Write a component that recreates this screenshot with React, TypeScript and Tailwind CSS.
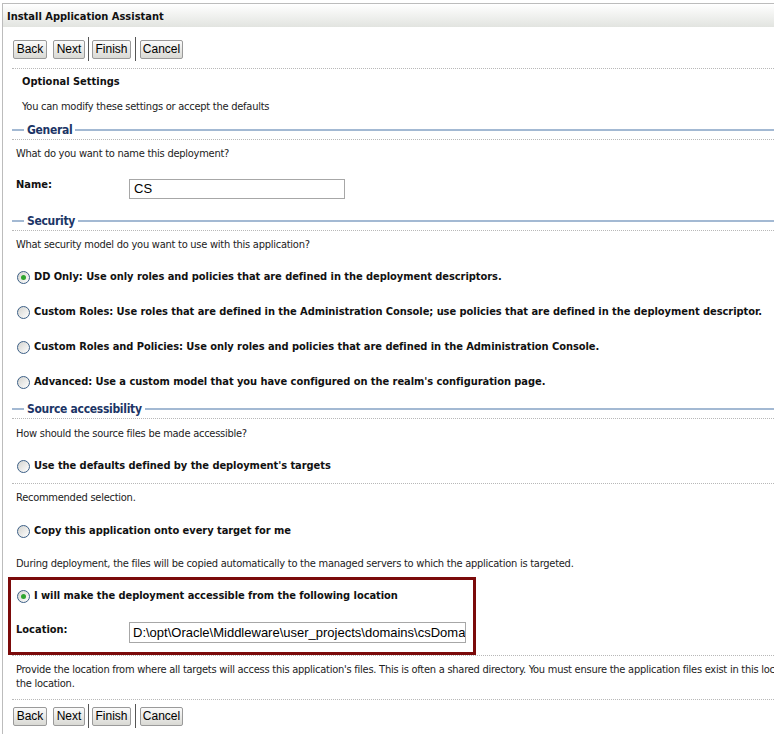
import React from "react";

const line = "border-b border-dotted border-[#b8b8b8]";

function Btn({ label, w }: { label: string; w: string }) {
  return (
    <button className={`${w} h-[19px] px-0 border border-[#9a9a9a] rounded-[2px] bg-gradient-to-b from-[#fbfbfb] to-[#d9d9d4] font-[family-name:'Liberation_Sans',Arial,sans-serif] text-[12px] leading-none text-black tracking-normal`}>
      {label}
    </button>
  );
}

function ButtonBar() {
  return (
    <div className="flex items-center h-[24px] pl-[1px]">
      <Btn label="Back" w="w-[34px]" />
      <div className="w-[6px]" />
      <Btn label="Next" w="w-[32px]" />
      <div className="w-px h-[24px] bg-[#555] mx-[3px]" />
      <Btn label="Finish" w="w-[39px]" />
      <div className="w-px h-[24px] bg-[#555] mx-[4px]" />
      <Btn label="Cancel" w="w-[43px]" />
    </div>
  );
}

function Legend({ title, h }: { title: string; h: string }) {
  return (
    <div className={`flex items-center ${h} ${line}`}>
      <div className="w-[12px] h-[2px] bg-[#a3b9d3]" />
      <span className="px-[3px] text-[12px] font-bold text-[#1c3566] tracking-[-0.3px]">{title}</span>
      <div className="flex-1 h-[2px] bg-[#a3b9d3]" />
    </div>
  );
}

function Radio({ checked }: { checked?: boolean }) {
  return (
    <span className="w-[13px] h-[13px] shrink-0 rounded-full border border-[#3c5f86] bg-gradient-to-br from-[#d4d4d0] to-white flex items-center justify-center">
      {checked && <span className="w-[5px] h-[5px] rounded-full bg-[#2fa52f]" />}
    </span>
  );
}

function RadioRow({ label, checked, h, extra = "" }: { label: string; checked?: boolean; h: string; extra?: string }) {
  return (
    <div className={`flex items-center gap-[4px] pl-[5px] ${h} ${extra}`}>
      <Radio checked={checked} />
      <span className="font-bold text-[11px] text-[#111] tracking-[-0.05px]">{label}</span>
    </div>
  );
}

function TextRow({ text, h, extra = "" }: { text: string; h: string; extra?: string }) {
  return (
    <div className={`flex items-center pl-[4px] ${h} ${extra}`}>
      <span>{text}</span>
    </div>
  );
}

export default function App() {
  return (
    <div className="w-[774px] h-[734px] bg-white pt-[3px] overflow-hidden font-[family-name:'DejaVu_Sans_Condensed','DejaVu_Sans',sans-serif] text-[11px] text-[#222] tracking-[-0.25px]">
      <div className="ml-[2px] h-[731px] border-l border-t border-[#bcbcbc]">
        <div className="h-[23px] flex items-center pl-[4px] pt-[3px] bg-gradient-to-b from-white to-[#e2e4e0]">
          <span className="font-bold text-[11px] text-[#111] tracking-normal">Install Application Assistant</span>
        </div>

        <div className="pl-[9px]">
          <div className={`h-[42px] pt-[10px] ${line}`}>
            <ButtonBar />
          </div>

          <div className="pl-[10px]">
            <div className="h-[26px] flex items-center font-bold text-[#111] tracking-normal">Optional Settings</div>
            <div className="h-[25px] flex items-center">You can modify these settings or accept the defaults</div>
          </div>

          <Legend title="General" h="h-[20px]" />
          <TextRow text="What do you want to name this deployment?" h="h-[29px]" />
          <div className="h-[42px] flex items-start pl-[4px]">
            <span className="w-[113px] mt-[8px] leading-[16px] font-bold text-[#111] tracking-normal">Name:</span>
            <div className="mt-[10px] w-[216px] h-[20px] border border-[#a7a7a7] flex items-center pl-[4px] font-[family-name:'Liberation_Sans',Arial,sans-serif] text-[13px] text-black tracking-normal">
              CS
            </div>
          </div>

          <Legend title="Security" h="h-[20px]" />
          <TextRow text="What security model do you want to use with this application?" h="h-[29px]" />
          <RadioRow checked h="h-[35px]" label="DD Only: Use only roles and policies that are defined in the deployment descriptors." />
          <RadioRow h="h-[35px]" label="Custom Roles: Use roles that are defined in the Administration Console; use policies that are defined in the deployment descriptor." />
          <RadioRow h="h-[35px]" label="Custom Roles and Policies: Use only roles and policies that are defined in the Administration Console." />
          <RadioRow h="h-[35px]" label="Advanced: Use a custom model that you have configured on the realm's configuration page." />

          <Legend title="Source accessibility" h="h-[19px]" />
          <TextRow text="How should the source files be made accessible?" h="h-[31px]" />
          <RadioRow h="h-[34px]" extra={line} label="Use the defaults defined by the deployment's targets" />
          <TextRow text="Recommended selection." h="h-[29px]" />
          <RadioRow h="h-[37px]" label="Copy this application onto every target for me" />
          <TextRow text="During deployment, the files will be copied automatically to the managed servers to which the application is targeted." h="h-[28px]" />

          <div className="relative">
            <RadioRow checked h="h-[36px]" label="I will make the deployment accessible from the following location" />
            <div className={`h-[42px] flex items-start pl-[4px] ${line}`}>
              <span className="w-[113px] mt-[8px] leading-[16px] font-bold text-[#111] tracking-normal">Location:</span>
              <div className="mt-[8px] w-[337px] h-[21px] border border-[#a7a7a7] flex items-center pl-[3px] overflow-hidden whitespace-nowrap font-[family-name:'Liberation_Sans',Arial,sans-serif] text-[13px] text-black tracking-normal">
                D:\opt\Oracle\Middleware\user_projects\domains\csDomain
              </div>
            </div>
            <div className="absolute left-[-4px] top-[-1px] w-[468px] h-[78px] border-[3px] border-[#7b0a0a] pointer-events-none" />
          </div>

          <div className={`h-[44px] pt-[7px] pl-[4px] leading-[14px] whitespace-nowrap overflow-hidden ${line}`}>
            Provide the location from where all targets will access this application's files. This is often a shared directory. You must ensure the application files exist in this location
            <br />
            the location.
          </div>

          <div className="pt-[4px]">
            <ButtonBar />
          </div>
        </div>
      </div>
    </div>
  );
}
